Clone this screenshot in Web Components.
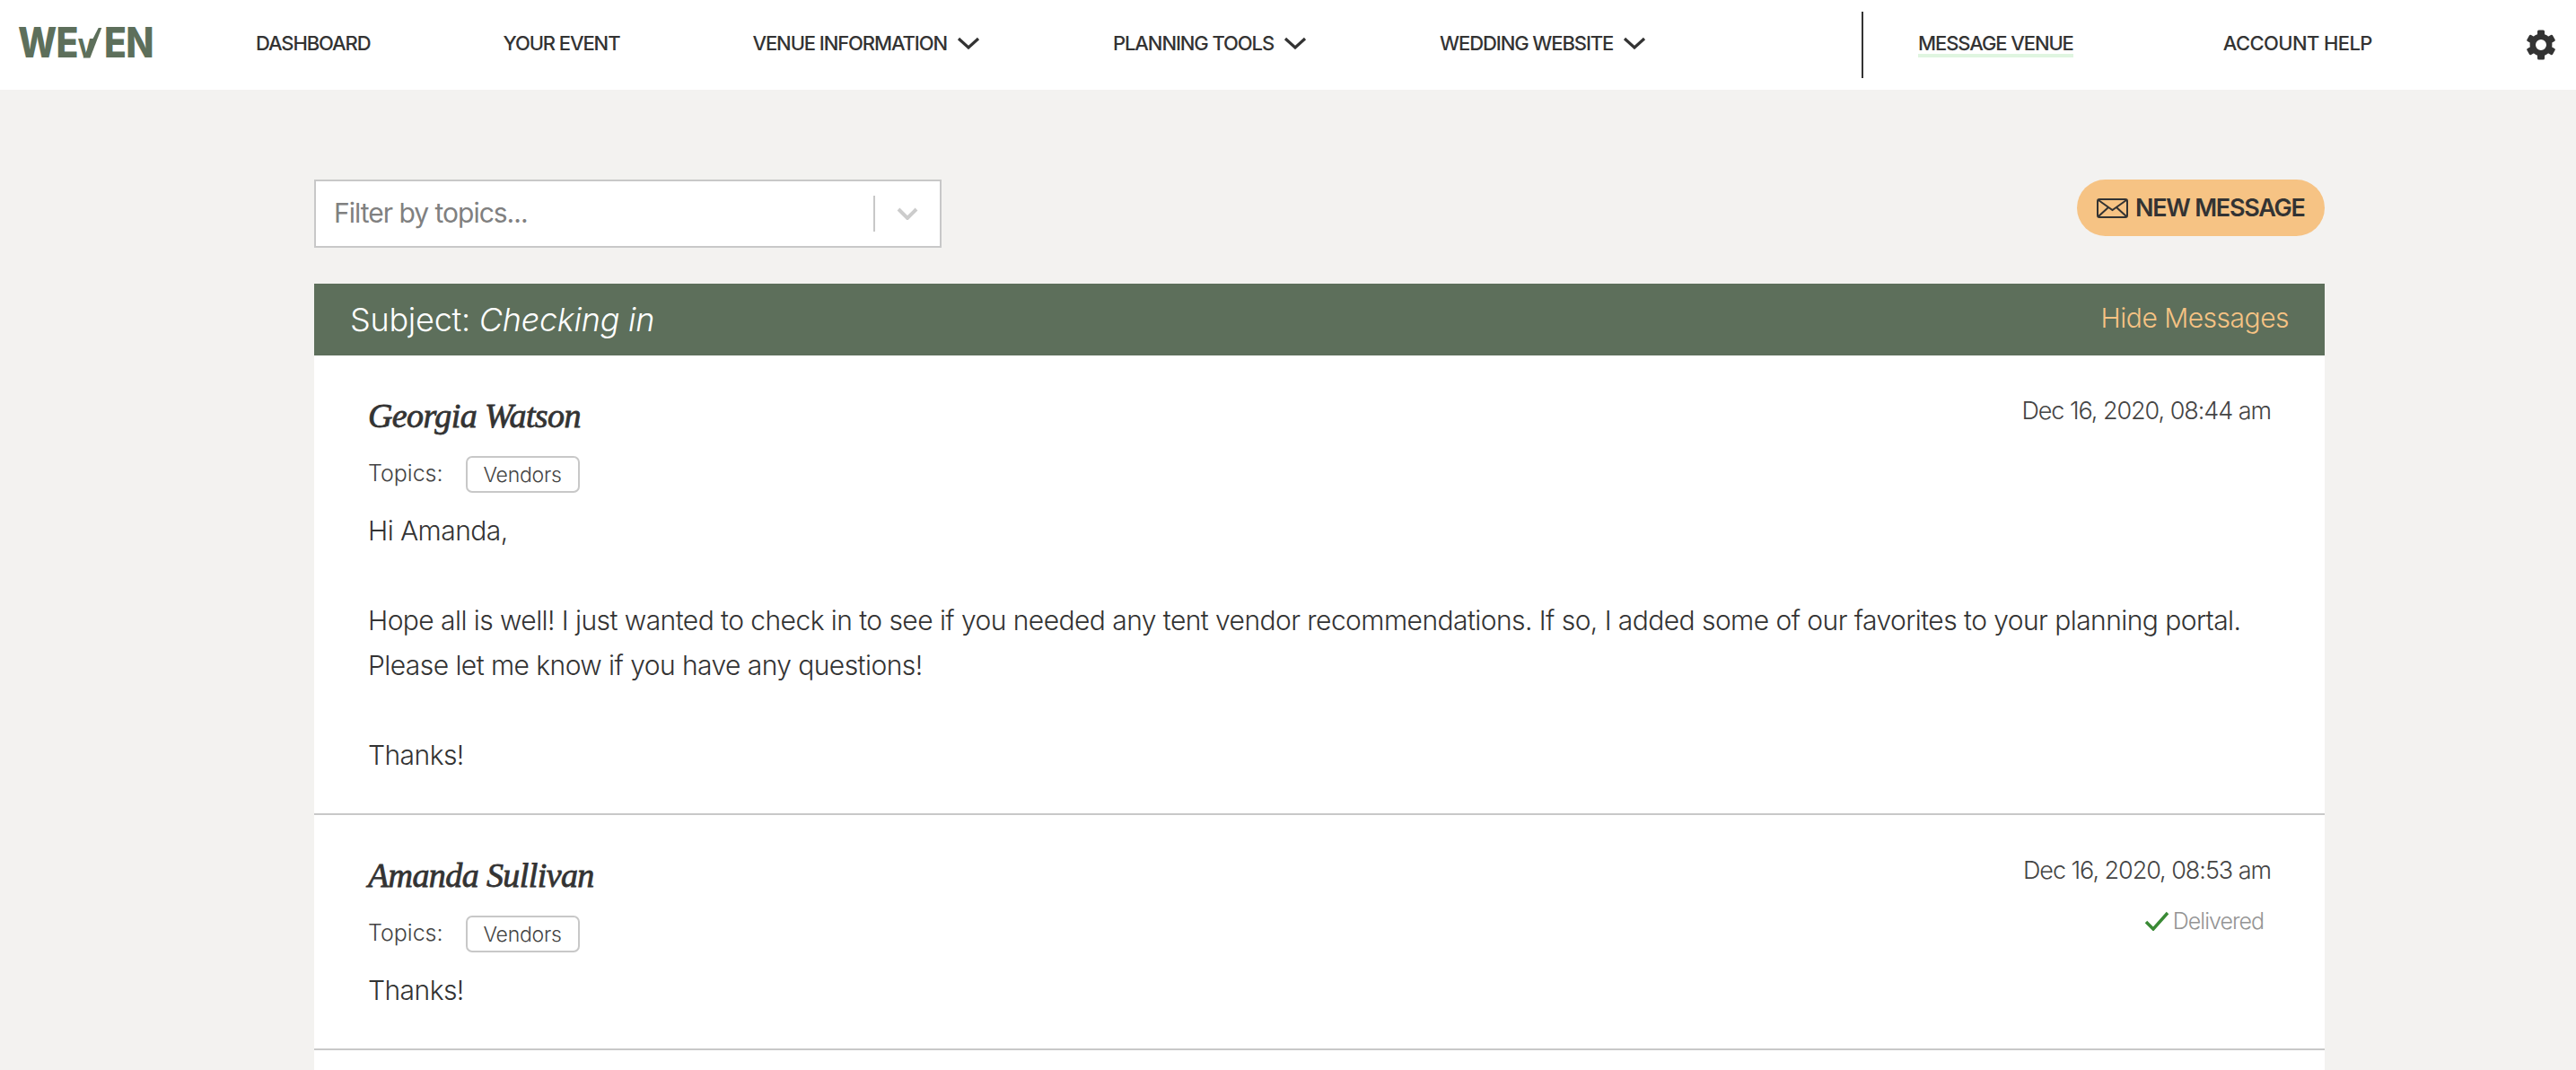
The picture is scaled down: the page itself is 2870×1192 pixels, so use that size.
<!DOCTYPE html>
<html lang="en">
<head>
<meta charset="utf-8">
<title>Weven messages</title>
<style>
  html, body { margin: 0; height: 100%; }
  body {
    background: #f3f2f0;
    color: #333;
    font-family: "Inter", "Liberation Sans", sans-serif;
    overflow: hidden;
  }
</style>
</head>
<body>
<app-header>
  <nav-link>DASHBOARD</nav-link>
  <nav-link>YOUR EVENT</nav-link>
  <nav-link menu>VENUE INFORMATION</nav-link>
  <nav-link menu>PLANNING TOOLS</nav-link>
  <nav-link menu>WEDDING WEBSITE</nav-link>
  <nav-link slot="right" active>MESSAGE VENUE</nav-link>
  <nav-link slot="right" wide>ACCOUNT HELP</nav-link>
</app-header>
<page-main>
  <filter-select slot="tools" placeholder="Filter by topics..."></filter-select>
  <new-message slot="tools">NEW MESSAGE</new-message>
  <message-thread subject="Checking in">
    <message-item name="Georgia Watson" date="Dec 16, 2020, 08:44 am" topic="Vendors">
      Hi Amanda,<br><br>
      Hope all is well! I just wanted to check in to see if you needed any tent vendor recommendations. If so, I added some of our favorites to your planning portal. Please let me know if you have any questions!<br><br>
      Thanks!
    </message-item>
    <message-item name="Amanda Sullivan" date="Dec 16, 2020, 08:53 am" topic="Vendors" delivered>
      Thanks!
    </message-item>
  </message-thread>
</page-main>

<script>
function shadow(el, html) {
  el.attachShadow({mode: "open"}).innerHTML = html;
}

class AppHeader extends HTMLElement {
  constructor() {
    super();
    shadow(this, `
<style>
  :host { display: flex; align-items: center; height: 100px; background: #fff; }
  .logo {
    width: 285px;
    flex: none;
    padding-left: 20px;
    box-sizing: border-box;
    font: 800 47px/47px "Inter", "Liberation Sans", sans-serif;
    color: #5d6f5b;
    white-space: nowrap;
  }
  .logo span { display: inline-block; transform: scaleX(.87); transform-origin: left; letter-spacing: -1px; }
  /* the logo's V is a small letter with one long arm, like a tick */
  .logo i { font-style: normal; font-size: 28px; position: relative; display: inline-block; width: 34px; }
  .logo i::after {
    content: "";
    position: absolute;
    left: 0;
    bottom: 13px;
    width: 34px;
    height: 34px;
    background: #5d6f5b;
    clip-path: polygon(7px 34px, 16px 34px, 31px 0, 27px 0);
  }
  .left, .right { display: flex; align-items: center; gap: 148px; }
  .left { flex: 1; }
  .right { gap: 167px; box-sizing: border-box; width: 738px; border-left: 2px solid #333; height: 74px; padding-left: 61px; }
  svg { display: block; width: 32px; height: 34px; margin: 0 23px 0 3px; fill: #333; }
</style>
<div class="logo"><span>WE<i>V</i>EN</span></div>
<div class="left"><slot></slot></div>
<div class="right"><slot name="right"></slot></div>
<svg viewBox="0 0 32 34">
  <circle cx="16" cy="17" r="9.2" fill="none" stroke="#333" stroke-width="6.4"/>
  <g id="teeth">
    <rect x="12" y="0.5" width="8" height="7" rx="1.5"/>
    <rect x="12" y="26.5" width="8" height="7" rx="1.5"/>
    <rect x="12" y="0.5" width="8" height="7" rx="1.5" transform="rotate(60 16 17)"/>
    <rect x="12" y="0.5" width="8" height="7" rx="1.5" transform="rotate(120 16 17)"/>
    <rect x="12" y="0.5" width="8" height="7" rx="1.5" transform="rotate(240 16 17)"/>
    <rect x="12" y="0.5" width="8" height="7" rx="1.5" transform="rotate(300 16 17)"/>
  </g>
</svg>
`);
  }
}

class NavLink extends HTMLElement {
  constructor() {
    super();
    const chevron = this.hasAttribute("menu")
      ? `<svg width="26" height="14" viewBox="0 0 26 14"><path d="M2 2l11 10L24 2" fill="none" stroke="#333" stroke-width="3.2"/></svg>`
      : "";
    shadow(this, `
<style>
  :host {
    display: inline-flex;
    align-items: center;
    gap: 11px;
    position: relative;
    top: -2px;
    font-size: 22px;
    font-weight: 500;
    line-height: 26px;
    letter-spacing: -1.1px;
    color: #333;
    white-space: nowrap;
  }
  :host([wide]) { letter-spacing: -0.6px; }
  :host([active])::after {
    content: "";
    position: absolute;
    left: 0;
    right: 0;
    top: 25px;
    height: 4px;
    background: #dff5e0;
  }
</style>
<slot></slot>${chevron}
`);
  }
}

class PageMain extends HTMLElement {
  constructor() {
    super();
    shadow(this, `
<style>
  :host { display: block; padding: 100px 280px 0 350px; }
  .tools { display: flex; justify-content: space-between; align-items: flex-start; height: 116px; }
</style>
<div class="tools"><slot name="tools"></slot></div>
<slot></slot>
`);
  }
}

class FilterSelect extends HTMLElement {
  constructor() {
    super();
    shadow(this, `
<style>
  :host {
    display: flex;
    align-items: center;
    box-sizing: border-box;
    width: 699px;
    height: 76px;
    padding-left: 20px;
    background: #fff;
    border: 2px solid #c8c8c8;
    color: #808080;
    font-size: 30px;
    letter-spacing: -1px;
  }
  span { flex: 1; padding-bottom: 2px; }
  b { width: 2px; height: 40px; background: #c8c8c8; }
  svg { margin: 0 24px 0 24px; }
</style>
<span>${this.getAttribute("placeholder")}</span>
<b></b>
<svg width="24" height="14" viewBox="0 0 24 14"><path d="M2 2l10 10L22 2" fill="none" stroke="#ccc" stroke-width="4"/></svg>
`);
  }
}

class NewMessage extends HTMLElement {
  constructor() {
    super();
    shadow(this, `
<style>
  :host {
    display: flex;
    align-items: center;
    gap: 8px;
    box-sizing: border-box;
    width: 276px;
    height: 63px;
    padding-left: 22px;
    border-radius: 32px;
    background: #f6c384;
    color: #333;
    font-size: 27px;
    font-weight: 600;
    letter-spacing: -1.25px;
    white-space: nowrap;
  }
</style>
<svg width="35" height="22" viewBox="0 0 35 22" fill="none" stroke="#333" stroke-width="2">
  <rect x="1" y="1" width="33" height="20" rx="2"/>
  <path d="M2 2l15.5 11L33 2M2 20l11-10M33 20L22 10"/>
</svg>
<slot></slot>
`);
  }
}

class MessageThread extends HTMLElement {
  constructor() {
    super();
    shadow(this, `
<style>
  :host { display: block; background: #fff; height: 900px; }
  header {
    display: flex;
    justify-content: space-between;
    align-items: center;
    height: 80px;
    padding: 0 40px;
    background: #5d6f5b;
    color: #fff;
    font-size: 36px;
    font-weight: 300;
    letter-spacing: -0.25px;
  }
  em { font-style: italic; }
  a { color: #f6c384; font-size: 30px; font-weight: 300; letter-spacing: -0.5px; margin-bottom: 5px; }
</style>
<header>
  <div>Subject: <em>${this.getAttribute("subject")}</em></div>
  <a>Hide Messages</a>
</header>
<slot></slot>
`);
  }
}

class MessageItem extends HTMLElement {
  constructor() {
    super();
    const delivered = this.hasAttribute("delivered")
      ? `<div class="delivered"><svg width="28" height="22" viewBox="0 0 28 22"><path d="M2 12l8 8L26 2" fill="none" stroke="#3a8a35" stroke-width="3.5"/></svg>Delivered</div>`
      : "";
    shadow(this, `
<style>
  :host {
    display: block;
    position: relative;
    padding: 44px 60px 40px 60px;
    border-bottom: 2px solid #c8c8c8;
  }
  .name {
    font: italic 400 38px/46px "Liberation Serif", serif;
    -webkit-text-stroke: 0.8px #333;
    color: #333;
    letter-spacing: -0.6px;
  }
  .topics {
    display: flex;
    align-items: center;
    height: 41px;
    margin: 22px 0 17px;
    font-size: 25px;
    font-weight: 300;
    color: #444;
  }
  label { padding-bottom: 3px; }
  .topics span {
    display: flex;
    align-items: center;
    justify-content: center;
    box-sizing: border-box;
    width: 127px;
    height: 41px;
    margin-left: 25px;
    border: 2px solid #c8c8c8;
    border-radius: 7px;
    font-size: 23px;
    letter-spacing: -0.2px;
  }
  .body { font-size: 30px; font-weight: 350; line-height: 50px; color: #333; letter-spacing: -0.56px; }
  .meta {
    position: absolute;
    top: 42px;
    right: 60px;
    text-align: right;
    font-size: 27px;
    line-height: 40px;
    font-weight: 350;
    color: #444;
    letter-spacing: -1.05px;
  }
  .delivered {
    display: flex;
    justify-content: flex-end;
    align-items: center;
    gap: 4px;
    margin: 18px 8px 0 0;
    font-size: 25px;
    line-height: 36px;
    letter-spacing: -1px;
    font-weight: 300;
    color: #949494;
  }
</style>
<div class="name">${this.getAttribute("name")}</div>
<div class="topics"><label>Topics:</label><span>${this.getAttribute("topic")}</span></div>
<div class="body"><slot></slot></div>
<div class="meta">${this.getAttribute("date")}${delivered}</div>
`);
  }
}

customElements.define("app-header", AppHeader);
customElements.define("nav-link", NavLink);
customElements.define("page-main", PageMain);
customElements.define("filter-select", FilterSelect);
customElements.define("new-message", NewMessage);
customElements.define("message-thread", MessageThread);
customElements.define("message-item", MessageItem);
</script>
</body>
</html>
